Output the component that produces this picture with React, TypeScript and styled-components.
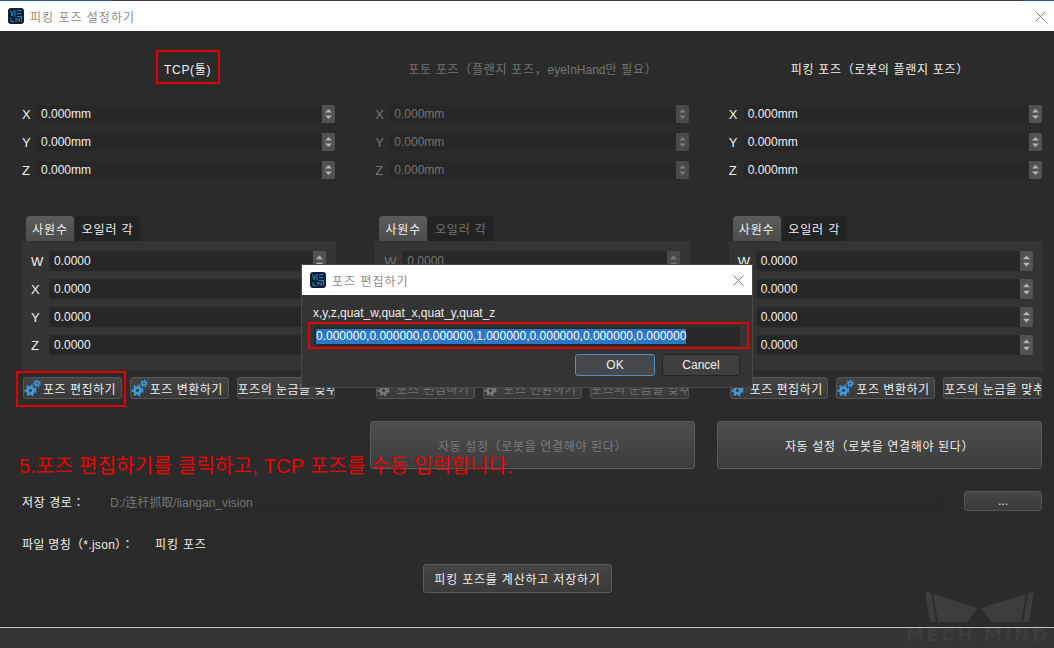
import React from "react";
import styled, { createGlobalStyle } from "styled-components";

const FONT = `"Liberation Sans", "Noto Sans CJK KR", sans-serif`;

const Global = createGlobalStyle`
  html, body { margin: 0; padding: 0; background: #2b2b2b; }
  * { box-sizing: border-box; }
  body { font-family: ${FONT}; font-size: 12px; color: #f0f0f0; }
`;

const Page = styled.div`
  position: relative;
  width: 1054px;
  height: 648px;
  display: flex;
  flex-direction: column;
  overflow: hidden;
  background: #2b2b2b;
`;

const TopEdge = styled.div`
  height: 1px;
  flex: none;
  background: linear-gradient(
    to right,
    #2d5a9e 0,
    #2d5a9e 112px,
    #3a3d42 112px,
    #3a3d42 1022px,
    #2d5a9e 1022px
  );
`;

const TitleBar = styled.div<{ $h: number; $pad: number }>`
  height: ${(p) => p.$h}px;
  flex: none;
  display: flex;
  align-items: center;
  gap: 6px;
  padding: 0 ${(p) => p.$pad}px 0 ${(p) => p.$pad}px;
  background: #ffffff;
  color: #8c8c8c;
  font-size: 12px;
  letter-spacing: 1px;
  white-space: nowrap;
`;

const TitleText = styled.span`
  flex: 1;
`;

const Main = styled.div`
  flex: 1;
  padding: 20px 12px 0 22px;
`;

const Columns = styled.div`
  display: grid;
  grid-template-columns: repeat(3, 1fr);
  column-gap: 40px;
`;

const Column = styled.section<{ $disabled?: boolean }>`
  color: ${(p) => (p.$disabled ? "#757575" : "#f0f0f0")};
  min-width: 0;
`;

const ColumnTitle = styled.div<{ $indent: number }>`
  height: 34px;
  display: flex;
  align-items: center;
  padding-left: ${(p) => p.$indent}px;
  letter-spacing: 0.7px;
  white-space: pre;
`;

const Latin = styled.span`
  letter-spacing: 0;
`;

const PoseRows = styled.div`
  margin-top: 20px;
  display: flex;
  flex-direction: column;
  gap: 10px;
`;

const Row = styled.div<{ $h: number; $label: number }>`
  height: ${(p) => p.$h}px;
  display: grid;
  grid-template-columns: ${(p) => p.$label}px 1fr 13px;
  align-items: stretch;
`;

const AxisLabel = styled.span`
  display: flex;
  align-items: center;
  font-size: 13px;
`;

const Field = styled.div`
  display: flex;
  align-items: center;
  padding-left: 4px;
  background: #272727;
  border: 1px solid #292929;
  border-radius: 2px;
  white-space: nowrap;
  overflow: hidden;
`;

const SpinBox = styled.svg<{ $disabled?: boolean }>`
  display: block;
  width: 13px;
  height: 100%;
  background: ${(p) => (p.$disabled ? "#4a4a4a" : "#525252")};
  border-radius: 0 2px 2px 0;
`;

const TabBar = styled.div`
  margin-top: 37px;
  height: 25px;
  padding-left: 4px;
  display: flex;
  gap: 1px;
`;

const Tab = styled.div<{ $active?: boolean; $w: number; $disabled?: boolean }>`
  width: ${(p) => p.$w}px;
  display: flex;
  align-items: center;
  justify-content: center;
  border-radius: 4px 4px 0 0;
  letter-spacing: 0.85px;
  white-space: nowrap;
  color: ${(p) => (p.$active ? "#f0f0f0" : p.$disabled ? "#757575" : "#f0f0f0")};
  background: ${(p) =>
    p.$active ? "linear-gradient(#5c5c5c, #4c4c4c)" : "#232323"};
`;

const Panel = styled.div`
  width: calc(100% + 1px);
  height: 129px;
  padding: 10px 10px 0 9px;
  background: #343434;
  display: flex;
  flex-direction: column;
  gap: 8px;
`;

const ActionRow = styled.div`
  margin-top: 7px;
  padding-left: 1px;
  display: grid;
  grid-template-columns: repeat(3, 1fr);
  column-gap: 8px;
`;

const ToolButton = styled.div<{ $disabled?: boolean }>`
  height: 22px;
  display: flex;
  align-items: center;
  gap: 2px;
  padding-left: 0;
  border: 1px solid #555555;
  border-radius: 3px;
  background: linear-gradient(#444444, #393939);
  color: ${(p) => (p.$disabled ? "#757575" : "#f0f0f0")};
  letter-spacing: 0.5px;
  white-space: nowrap;
  overflow: hidden;
`;

const AutoRow = styled.div`
  margin-top: 22px;
  display: flex;
  justify-content: flex-end;
  gap: 22px;
`;

const BigButton = styled.div<{ $disabled?: boolean }>`
  width: 325px;
  height: 48px;
  display: flex;
  align-items: center;
  justify-content: center;
  border: 1px solid #5a5a5a;
  border-radius: 3px;
  background: linear-gradient(#4e4e4e, #3c3c3c);
  color: ${(p) => (p.$disabled ? "#7c7c7c" : "#f0f0f0")};
  letter-spacing: 0.65px;
`;

const FormRow = styled.div`
  margin-top: 22px;
  height: 20px;
  display: flex;
  align-items: center;
`;

const FormLabel = styled.span<{ $w: number; $spacing: number }>`
  width: ${(p) => p.$w}px;
  flex: none;
  letter-spacing: ${(p) => p.$spacing}px;
  white-space: nowrap;
`;

const FormField = styled.div<{ $w: number; $muted?: boolean }>`
  width: ${(p) => p.$w}px;
  height: 20px;
  flex: none;
  display: flex;
  align-items: center;
  padding-left: 3px;
  background: #2a2a2a;
  border: 1px solid #272727;
  border-radius: 2px;
  color: ${(p) => (p.$muted ? "#757575" : "#f0f0f0")};
  letter-spacing: ${(p) => (p.$muted ? "0" : "0.85px")};
  white-space: nowrap;
`;

const BrowseButton = styled.div`
  width: 78px;
  height: 20px;
  margin-left: 21px;
  display: flex;
  align-items: center;
  justify-content: center;
  border: 1px solid #555555;
  border-radius: 3px;
  background: linear-gradient(#464646, #3a3a3a);
`;

const CalcRow = styled.div`
  margin-top: 11px;
  padding-left: 401px;
`;

const CalcButton = styled.div`
  width: 189px;
  height: 29px;
  display: flex;
  align-items: center;
  justify-content: center;
  border: 1px solid #5a5a5a;
  border-radius: 3px;
  background: linear-gradient(#464646, #3a3a3a);
  letter-spacing: 0.8px;
  white-space: nowrap;
`;

const Footer = styled.div`
  height: 21px;
  flex: none;
  background: #353535;
  border-top: 1px solid #c8c8c8;
`;

const Watermark = styled.div`
  position: absolute;
  left: 906px;
  top: 588px;
  width: 148px;
  height: 60px;
  color: #3d3d3d;
  pointer-events: none;
  overflow: hidden;
`;

const WatermarkLogo = styled.svg`
  display: block;
  width: 149px;
  height: 38px;
`;

const WatermarkText = styled.div`
  margin-top: -1px;
  font-family: "DejaVu Sans", sans-serif;
  font-weight: 700;
  font-size: 18px;
  line-height: 20px;
  letter-spacing: 2.7px;
  white-space: nowrap;
`;

const RedBox = styled.div<{ $x: number; $y: number; $w: number; $h: number }>`
  position: absolute;
  left: ${(p) => p.$x}px;
  top: ${(p) => p.$y}px;
  width: ${(p) => p.$w}px;
  height: ${(p) => p.$h}px;
  border: 2px solid #df0000;
  pointer-events: none;
`;

const Annotation = styled.div`
  position: absolute;
  left: 19px;
  top: 453px;
  color: #f00000;
  font-size: 20px;
  line-height: 26px;
  letter-spacing: 0.2px;
  white-space: nowrap;
`;

const Dialog = styled.div`
  position: absolute;
  left: 302px;
  top: 265px;
  width: 450px;
  height: 122px;
  background: #343434;
  box-shadow: 0 0 0 1px #4a4a4a;
  display: flex;
  flex-direction: column;
`;

const DialogBody = styled.div`
  padding: 11px 12px 0 11px;
  display: flex;
  flex-direction: column;
`;

const DialogLabel = styled.div`
  height: 14px;
  line-height: 14px;
  color: #eeeeee;
`;

const DialogField = styled.div`
  margin: 6px 0 0 1px;
  height: 20px;
  display: flex;
  align-items: center;
  padding-left: 2px;
  background: #292929;
  border-radius: 2px;
`;

const Selected = styled.span`
  background: #2b77c8;
  color: #ffffff;
  line-height: 15px;
`;

const DialogActions = styled.div`
  margin-top: 8px;
  display: flex;
  justify-content: flex-end;
  gap: 7px;
`;

const DialogButton = styled.div<{ $primary?: boolean; $w: number }>`
  width: ${(p) => p.$w}px;
  height: 22px;
  display: flex;
  align-items: center;
  justify-content: center;
  border: 1px solid ${(p) => (p.$primary ? "#4f8fc6" : "#222222")};
  border-radius: 3px;
  background: ${(p) => (p.$primary ? "#46484c" : "#3f3f3f")};
`;

const LogoSvg = styled.svg`
  flex: none;
  display: block;
`;

const CloseSvg = styled.svg`
  flex: none;
  display: block;
`;

const GearSvg = styled.svg`
  flex: none;
  display: block;
`;

const Logo = () => (
  <LogoSvg width="16" height="16" viewBox="0 0 16 16">
    <rect width="16" height="16" rx="3" fill="#0c2238" />
    <g fill="none" stroke="#2f7fb8" strokeWidth="1">
      <path d="M2.5 2.5 4 8 5.5 2.5M7 2v6.5M9 2.5h4.5M9 8.5h4.5M9 5.5h4" />
      <path d="M3 13.5V10M3 13.5h3M8 13.5V10l3.5 3.5V10M13.5 8v5.5" />
    </g>
  </LogoSvg>
);

const CloseIcon = () => (
  <CloseSvg width="11" height="11" viewBox="0 0 11 11">
    <path d="M.5.5l10 10M10.5.5l-10 10" stroke="#7c7c7c" strokeWidth="1" fill="none" />
  </CloseSvg>
);

const Gear = ({ disabled }: { disabled?: boolean }) => {
  const c = disabled ? "#7a7a7a" : "#3f9be2";
  const hole = disabled ? "#404040" : "#3f4448";
  return (
    <GearSvg width="17" height="18" viewBox="0 0 17 18">
      <circle cx="6.5" cy="11.5" r="5" fill="none" stroke={c} strokeWidth="2" strokeDasharray="2 2.7" />
      <circle cx="6.5" cy="11.5" r="4.3" fill={c} />
      <circle cx="6.5" cy="11.5" r="1.7" fill={hole} />
      {!disabled && (
        <>
          <circle cx="13" cy="4.5" r="3.1" fill="none" stroke={c} strokeWidth="1.6" strokeDasharray="1.3 1.5" />
          <circle cx="13" cy="4.5" r="2.5" fill={c} />
          <circle cx="13" cy="4.5" r="1" fill={hole} />
        </>
      )}
    </GearSvg>
  );
};

const Spin = ({ disabled }: { disabled?: boolean }) => {
  const c = disabled ? "#7a7a7a" : "#b4b4b4";
  return (
    <SpinBox $disabled={disabled} viewBox="0 0 13 18" preserveAspectRatio="none">
      <path d="M6.5 4l3.5 3.5H3z" fill={c} />
      <path d="M3 10.5h7L6.5 14z" fill={c} />
    </SpinBox>
  );
};

const POSE = ["X", "Y", "Z"];
const QUAT = ["W", "X", "Y", "Z"];

const columns: { id: string; title: React.ReactNode; indent: number; disabled: boolean }[] = [
  { id: "tcp", title: "TCP(툴)", indent: 142, disabled: false },
  {
    id: "photo",
    title: (
      <span>
        포토 포즈（플랜지 포즈，<Latin>eyeInHand</Latin>만 필요）
      </span>
    ),
    indent: 33,
    disabled: true,
  },
  { id: "pick", title: "피킹 포즈（로봇의 플랜지 포즈）", indent: 62, disabled: false },
];

const tools = ["포즈 편집하기", "포즈 변환하기", "포즈의 눈금을 맞추기"];

export default function App() {
  return (
    <Page>
      <Global />
      <TopEdge />
      <TitleBar $h={30} $pad={8}>
        <Logo />
        <TitleText>피킹 포즈 설정하기</TitleText>
        <CloseIcon />
      </TitleBar>
      <Main>
        <Columns>
          {columns.map((col) => (
            <Column key={col.id} $disabled={col.disabled}>
              <ColumnTitle $indent={col.indent}>{col.title}</ColumnTitle>
              <PoseRows>
                {POSE.map((a) => (
                  <Row key={a} $h={18} $label={14}>
                    <AxisLabel>{a}</AxisLabel>
                    <Field>0.000mm</Field>
                    <Spin disabled={col.disabled} />
                  </Row>
                ))}
              </PoseRows>
              <TabBar>
                <Tab $active $w={48}>사원수</Tab>
                <Tab $w={65} $disabled={col.disabled}>오일러 각</Tab>
              </TabBar>
              <Panel>
                {QUAT.map((a) => (
                  <Row key={a} $h={20} $label={18}>
                    <AxisLabel>{a}</AxisLabel>
                    <Field>0.0000</Field>
                    <Spin disabled={col.disabled} />
                  </Row>
                ))}
              </Panel>
              <ActionRow>
                {tools.map((t, i) => (
                  <ToolButton key={t} $disabled={col.disabled}>
                    {i < 2 && <Gear disabled={col.disabled} />}
                    {t}
                  </ToolButton>
                ))}
              </ActionRow>
            </Column>
          ))}
        </Columns>
        <AutoRow>
          <BigButton $disabled>자동 설정（로봇을 연결해야 된다）</BigButton>
          <BigButton>자동 설정（로봇을 연결해야 된다）</BigButton>
        </AutoRow>
        <FormRow>
          <FormLabel $w={84} $spacing={0.6}>저장 경로：</FormLabel>
          <FormField $w={837} $muted>D:/连杆抓取/liangan_vision</FormField>
          <BrowseButton>...</BrowseButton>
        </FormRow>
        <FormRow>
          <FormLabel $w={129} $spacing={0.3}>파일 명칭（*.json）：</FormLabel>
          <FormField $w={177}>피킹 포즈</FormField>
        </FormRow>
        <CalcRow>
          <CalcButton>피킹 포즈를 계산하고 저장하기</CalcButton>
        </CalcRow>
      </Main>
      <Footer />

      <Watermark>
        <WatermarkLogo viewBox="0 0 149 38">
          <g fill="currentColor">
            <path d="M19 3l6 2 5 29h-6zM27 6l45 14-11 14H32z" />
            <path d="M128 3l-6 2-5 29h6zM120 6L75 20l11 14h29z" />
          </g>
        </WatermarkLogo>
        <WatermarkText>MECH MIND</WatermarkText>
      </Watermark>

      <Annotation>5.포즈 편집하기를 클릭하고, TCP 포즈를 수동 입력합니다.</Annotation>

      <Dialog>
        <TitleBar $h={30} $pad={8}>
          <Logo />
          <TitleText>포즈 편집하기</TitleText>
          <CloseIcon />
        </TitleBar>
        <DialogBody>
          <DialogLabel>x,y,z,quat_w,quat_x,quat_y,quat_z</DialogLabel>
          <DialogField>
            <Selected>0.000000,0.000000,0.000000,1.000000,0.000000,0.000000,0.000000</Selected>
          </DialogField>
          <DialogActions>
            <DialogButton $primary $w={80}>OK</DialogButton>
            <DialogButton $w={78}>Cancel</DialogButton>
          </DialogActions>
        </DialogBody>
      </Dialog>

      <RedBox $x={156} $y={50} $w={64} $h={34} />
      <RedBox $x={16} $y={371} $w={110} $h={36} />
      <RedBox $x={308} $y={322} $w={441} $h={27} />
    </Page>
  );
}
